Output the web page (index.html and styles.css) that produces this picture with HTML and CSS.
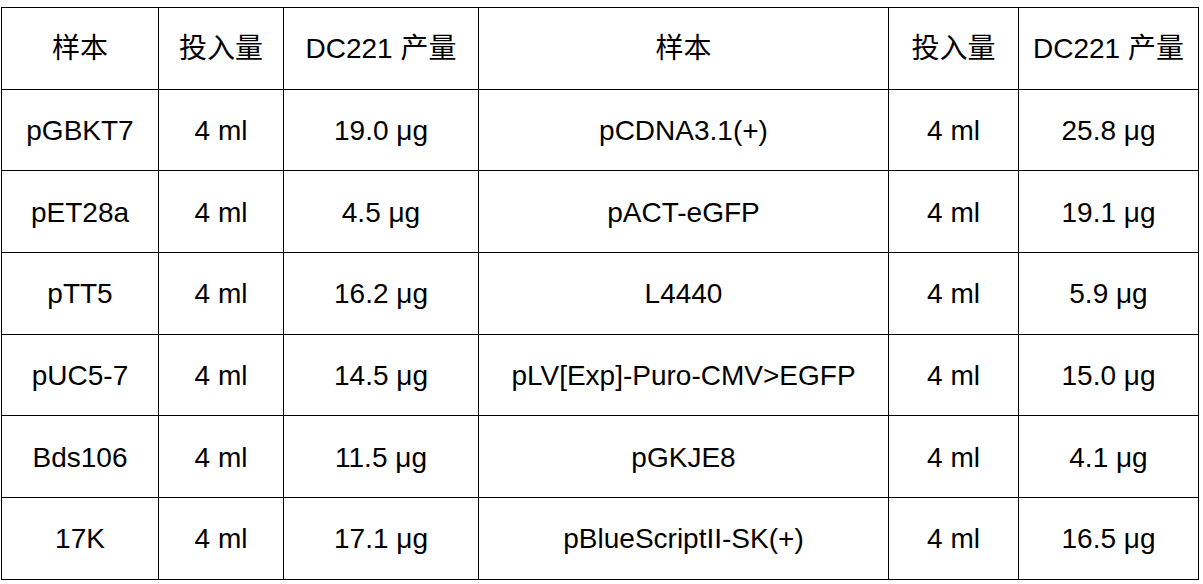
FILE: index.html
```html
<!DOCTYPE html>
<html lang="zh">
<head>
<meta charset="utf-8">
<link rel="stylesheet" href="styles.css">
</head>
<body>
<table class="yield">
  <colgroup>
    <col class="c1"><col class="c2"><col class="c3"><col class="c4"><col class="c5"><col class="c6">
  </colgroup>
  <tr><th>样本</th><th>投入量</th><th>DC221 产量</th><th>样本</th><th>投入量</th><th>DC221 产量</th></tr>
  <tr><td>pGBKT7</td><td>4 ml</td><td>19.0 μg</td><td>pCDNA3.1(+)</td><td>4 ml</td><td>25.8 μg</td></tr>
  <tr><td>pET28a</td><td>4 ml</td><td>4.5 μg</td><td>pACT-eGFP</td><td>4 ml</td><td>19.1 μg</td></tr>
  <tr><td>pTT5</td><td>4 ml</td><td>16.2 μg</td><td>L4440</td><td>4 ml</td><td>5.9 μg</td></tr>
  <tr><td>pUC5-7</td><td>4 ml</td><td>14.5 μg</td><td>pLV[Exp]-Puro-CMV&gt;EGFP</td><td>4 ml</td><td>15.0 μg</td></tr>
  <tr><td>Bds106</td><td>4 ml</td><td>11.5 μg</td><td>pGKJE8</td><td>4 ml</td><td>4.1 μg</td></tr>
  <tr><td>17K</td><td>4 ml</td><td>17.1 μg</td><td>pBlueScriptII-SK(+)</td><td>4 ml</td><td>16.5 μg</td></tr>
</table>
</body>
</html>
```
FILE: styles.css
```css
html, body {
  margin: 0;
  padding: 0;
  background: #ffffff;
}
body {
  padding: 7px 0 0 1px;
  font-family: "Liberation Sans", Arial, "Noto Sans CJK SC", sans-serif;
  color: #000;
}
.yield {
  border-collapse: collapse;
  table-layout: fixed;
  width: 1198px;
}
.c1 { width: 157px; }
.c2 { width: 125px; }
.c3 { width: 195px; }
.c4 { width: 410px; }
.c5 { width: 130px; }
.c6 { width: 180px; }
.yield th, .yield td {
  border: 1px solid #000;
  height: 78.7px;
  padding: 2px 0 0;
  text-align: center;
  vertical-align: middle;
  font-size: 28px;
  line-height: 32px;
  font-weight: normal;
  white-space: nowrap;
}
```
